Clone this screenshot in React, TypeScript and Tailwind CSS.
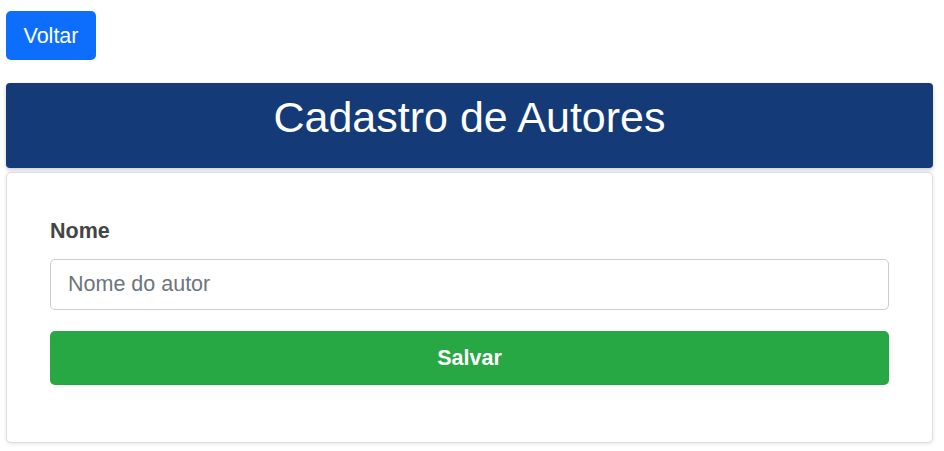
import React from "react";

export default function App() {
  return (
    <div className="min-h-[451px] bg-white pl-[6px] pr-[11px] pt-[11px] pb-[8px]" style={{ fontFamily: '"Liberation Sans", Arial, sans-serif' }}>
      <button className="h-[49px] w-[90px] rounded-[5px] bg-[#0d6efd] pt-[2px] text-[21.5px] text-white">Voltar</button>
      <div className="mt-[23px] h-[85px] rounded-[4px] bg-[#153a78] pt-[10px] text-center shadow-[0_2px_4px_rgba(0,0,0,0.2)]">
        <h1 className="text-[43px] font-normal leading-[49px] text-white">Cadastro de Autores</h1>
      </div>
      <div className="mt-[4px] rounded-[5px] border border-[#dedede] bg-white px-[43px] pt-[44px] pb-[57px] shadow-[0_1px_4px_rgba(0,0,0,0.1)]">
        <label className="block text-[21.5px] font-bold leading-[28px] text-[#444]">Nome</label>
        <input
          placeholder="Nome do autor"
          className="mt-[14px] block h-[51px] w-full rounded-[5px] border border-[#ccc] px-[17px] text-[21.5px] text-[#333] outline-none placeholder:text-[#6c757d]"
        />
        <button className="mt-[21px] block h-[54px] w-full rounded-[5px] bg-[#28a745] text-[21.5px] font-bold text-white">Salvar</button>
      </div>
    </div>
  );
}
